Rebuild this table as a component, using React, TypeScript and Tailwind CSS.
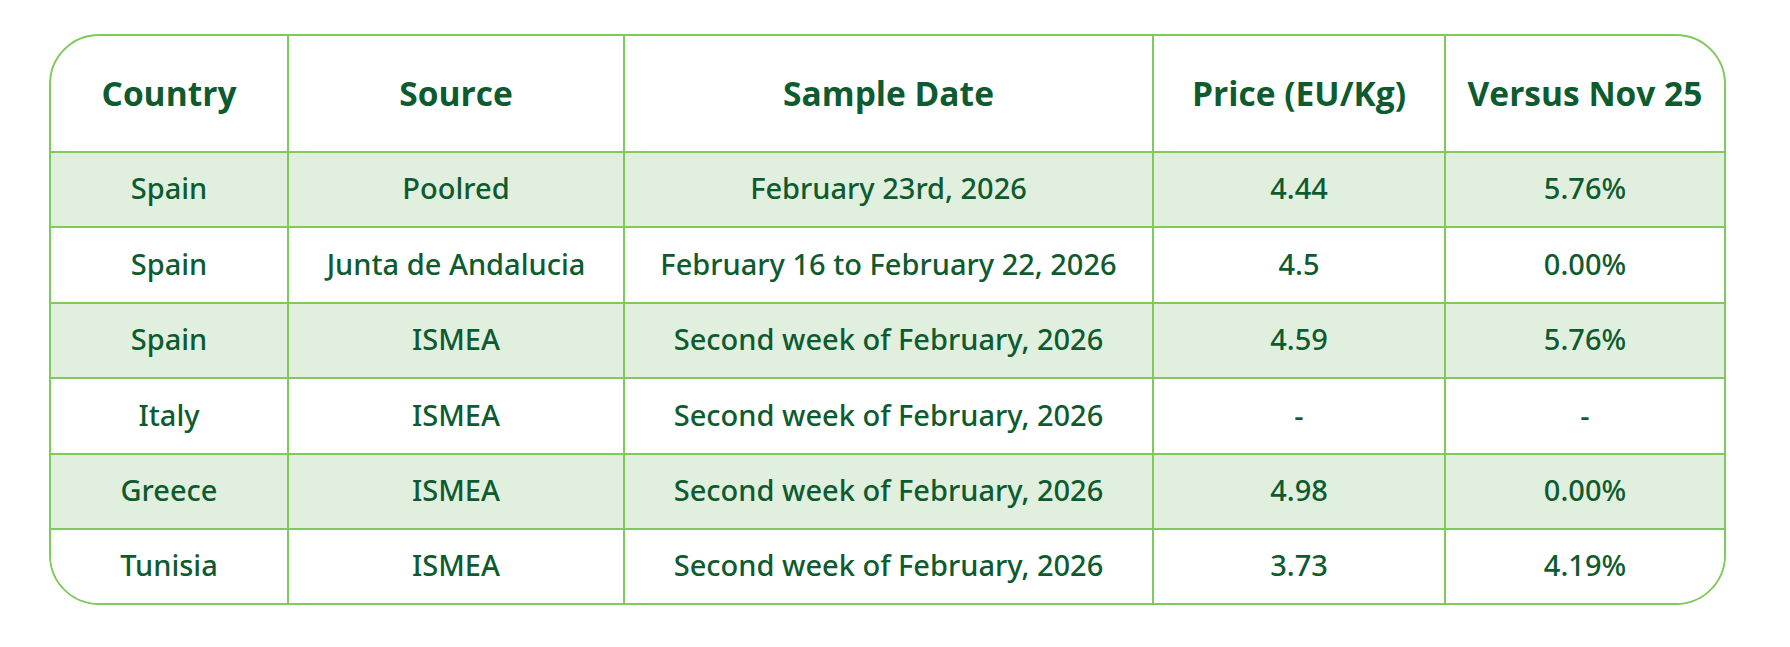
import React from "react";

const head = ["Country", "Source", "Sample Date", "Price (EU/Kg)", "Versus Nov 25"];
const rows = [
  ["Spain", "Poolred", "February 23rd, 2026", "4.44", "5.76%"],
  ["Spain", "Junta de Andalucia", "February 16 to February 22, 2026", "4.5", "0.00%"],
  ["Spain", "ISMEA", "Second week of February, 2026", "4.59", "5.76%"],
  ["Italy", "ISMEA", "Second week of February, 2026", "-", "-"],
  ["Greece", "ISMEA", "Second week of February, 2026", "4.98", "0.00%"],
  ["Tunisia", "ISMEA", "Second week of February, 2026", "3.73", "4.19%"],
];

export default function App() {
  return (
    <div className="w-[1790px] h-[647px] bg-white pt-[34px] pl-[49px]" style={{ fontFamily: "'Open Sans', 'Noto Sans', sans-serif" }}>
      <div className="w-[1677px] rounded-[50px] border-2 border-[#80c95c] overflow-hidden text-[#0d5b2e]">
        <div className="grid grid-cols-[236px_336px_529px_292px_280px] h-[115px]">
          {head.map((h, i) => (
            <div
              key={h}
              className={`flex items-center justify-center text-[33.5px] font-bold ${i > 0 ? "border-l-2 border-[#80c95c]" : ""}`}
            >
              {h}
            </div>
          ))}
        </div>
        {rows.map((r, ri) => (
          <div
            key={ri}
            className={`grid grid-cols-[236px_336px_529px_292px_280px] h-[75.4px] border-t-2 border-[#80c95c] ${ri % 2 === 0 ? "bg-[#e1efdf]" : "bg-white"}`}
          >
            {r.map((c, i) => (
              <div
                key={i}
                className={`flex items-center justify-center pb-[3px] text-[29px] font-medium font-['Noto_Sans',sans-serif] ${i > 0 ? "border-l-2 border-[#80c95c]" : ""}`}
              >
                {c}
              </div>
            ))}
          </div>
        ))}
      </div>
    </div>
  );
}
